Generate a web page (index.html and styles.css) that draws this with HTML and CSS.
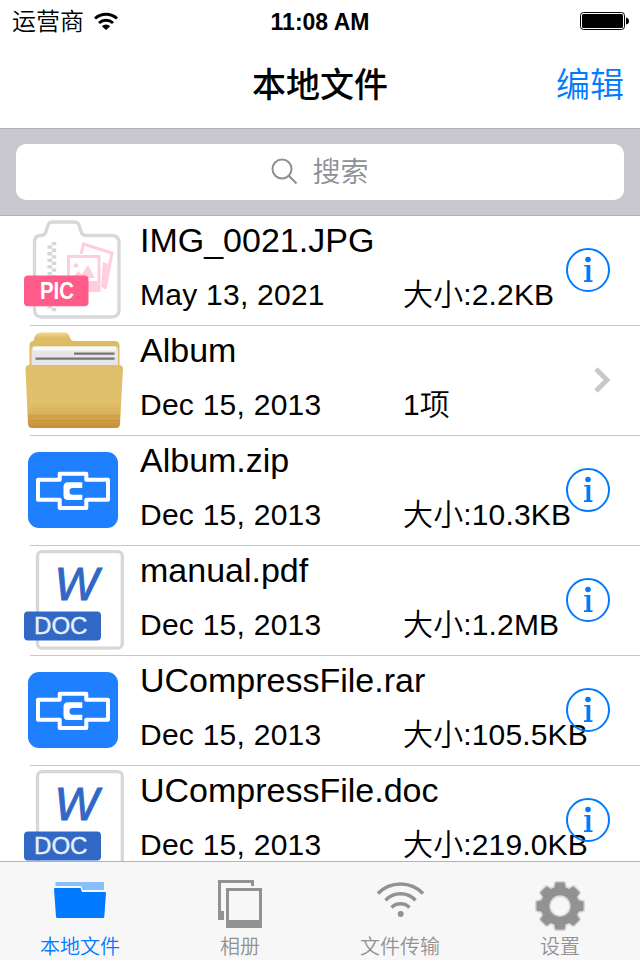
FILE: index.html
```html
<!DOCTYPE html>
<html lang="zh-CN">

<head>
    <meta charset="UTF-8">
    <meta name="viewport" content="width=device-width, initial-scale=1.0">
    <title>本地文件</title>
    <link rel="stylesheet" href="styles.css">
</head>

<body>

    <!-- Shared icons -->
    <svg class="sprite" width="0" height="0">
        <defs>
            <linearGradient id="folderFront" x1="0" y1="0" x2="0" y2="1">
                <stop offset="0" stop-color="#dfbf69" />
                <stop offset="0.6" stop-color="#e1c06b" />
                <stop offset="0.78" stop-color="#d9b05a" />
                <stop offset="0.8" stop-color="#cf9f4b" />
                <stop offset="0.87" stop-color="#d4a54d" />
                <stop offset="0.88" stop-color="#c8933c" />
                <stop offset="0.9" stop-color="#d19d43" />
                <stop offset="1" stop-color="#c68e35" />
            </linearGradient>
            <linearGradient id="folderBack" x1="0" y1="0" x2="0" y2="1">
                <stop offset="0" stop-color="#f0d98a" />
                <stop offset="0.15" stop-color="#ddbc66" />
                <stop offset="1" stop-color="#dcba63" />
            </linearGradient>
            <path id="tooth" d="M25 15l1.300-6.500h7.400L35 15z" />
        </defs>
        <symbol id="pic" viewBox="0 0 100 100">
            <path d="M16.500 15.500q4.500 0 5.500-4l2-6.200q1-3.300 5-3.300h21q4 0 5 3.300l2 6.200q1 4 5.500 4h25q7.500 0 7.500 7v67q0 7.500-7.500 7.500H18q-7.500 0-7.500-7.500V22.500q0-7 6-7z" fill="#fff" stroke="#d8d8d8" stroke-width="3.300" />
            <path d="M30 22v70" stroke="#d6d6d6" stroke-width="4.500" stroke-dasharray="3.300 3.300" />
            <path d="M25.700 25.500v66" stroke="#d6d6d6" stroke-width="4.500" stroke-dasharray="3.300 3.300" />
            <g fill="none" stroke="#ffcedc" stroke-width="3">
                <path d="M57 34l2.500-10L88 33l-7 36" />
                <path d="M79 42l5 2-4 24-3-1z" fill="#ffcedc" stroke="none" />
                <path d="M44.500 36.400h30.500v34h-30.500z" fill="#fff" />
                <path d="M45 61h30v11H45z" fill="#ffcedc" stroke="none" />
                <circle cx="52" cy="45.500" r="2.300" fill="#ffcedc" stroke="none" />
                <path d="M49 58l5-7 4 3 6-9 7 13z" fill="#ffcedc" stroke="none" />
            </g>
            <rect y="55.500" width="64.500" height="30.700" rx="4" fill="#ff5c8a" />
            <text class="pic-label" x="16" y="79" textLength="34" lengthAdjust="spacingAndGlyphs">PIC</text>
        </symbol>
        <symbol id="folder" viewBox="0 0 100 100">
            <path d="M5.500 40V16q0-5 4-5 1-8 7-8.500h24q4 0 5.500 5 1 3.500 4 3.500h41q4.500 0 4.500 5v24z" fill="url(#folderBack)" />
            <path d="M7.500 40V20q0-3.500 3.500-3.500h80q3 0 3 3.500v20z" fill="#e6e6e6" />
            <path d="M9 18.500h83" stroke="#f8f8f8" stroke-width="4" />
            <path d="M50 23.700h40.500M11.500 28.700h79" stroke="#767676" stroke-width="2.300" />
            <path d="M5 35h90q4 0 4 4l-3 55q-.300 4-4 4H8q-3.700 0-4-4L1.500 39q0-4 3.500-4z" fill="url(#folderFront)" />
        </symbol>
        <symbol id="zip" viewBox="0 0 100 100">
            <rect x="4" y="12" width="90" height="76" rx="11" fill="#1e80fe" />
            <path d="M14 39.700h21.700v-6h26.600v6H84v20.100H62.300V68H35.700v-8.200H14z" fill="none" stroke="#fff" stroke-width="4" stroke-linejoin="round" />
            <path d="M58.300 42.300H44q-4.500 0-4.500 4.500v8.700q0 4.500 4.500 4.500h14.300v-5.200H48.500q-3 0-3-3v-.900q0-3 3-3h9.800z" fill="#fff" />
        </symbol>
        <symbol id="doc" viewBox="0 0 100 100">
            <rect x="13.500" y="1.700" width="84.800" height="96.500" rx="4.500" fill="#fff" stroke="#d7d7d7" stroke-width="3.300" />
            <text class="doc-letter" x="30.500" y="49.500" textLength="44" lengthAdjust="spacingAndGlyphs">W</text>
            <rect y="61.500" width="77" height="29" rx="4" fill="#3168c5" />
            <text class="doc-label" x="10" y="84" textLength="53.500" lengthAdjust="spacingAndGlyphs">DOC</text>
        </symbol>
        <symbol id="info" viewBox="0 0 44 44">
            <circle cx="22" cy="22" r="21" fill="none" stroke="#007aff" stroke-width="2" />
            <circle cx="22" cy="11.500" r="2.800" fill="#007aff" />
            <path d="M18.300 17h6v15.300h2.200V34h-8.500v-1.700h2.500V18.500h-2.200z" fill="#007aff" />
        </symbol>
        <symbol id="cog" viewBox="0 0 60 60">
            <circle cx="30" cy="31" r="15" fill="none" />
            <use href="#tooth" />
            <use href="#tooth" transform="rotate(45 30 31)" />
            <use href="#tooth" transform="rotate(90 30 31)" />
            <use href="#tooth" transform="rotate(135 30 31)" />
            <use href="#tooth" transform="rotate(180 30 31)" />
            <use href="#tooth" transform="rotate(225 30 31)" />
            <use href="#tooth" transform="rotate(270 30 31)" />
            <use href="#tooth" transform="rotate(315 30 31)" />
        </symbol>
    </svg>

    <div class="status-bar">
        <div class="carrier">
            <span>运营商</span>
            <svg width="24" height="18" viewBox="0 0 24 18">
                <path d="M1 6.500a16.500 16.500 0 0 1 22 0M5 11a10.500 10.500 0 0 1 14 0" fill="none" stroke="#000" stroke-width="3" />
                <path d="M7.800 14.200a6.300 6.300 0 0 1 8.400 0L12 18z" />
            </svg>
        </div>
        <div class="time">11:08 AM</div>
        <div class="battery">
            <svg width="50" height="20" viewBox="0 0 50 20">
                <rect x="0.500" y="1.500" width="44" height="17" rx="3" fill="none" stroke="#000" />
                <rect x="2" y="3" width="41" height="14" rx="1.500" />
                <path d="M46 6.500q3 .500 3 3.500t-3 3.500z" />
            </svg>
        </div>
    </div>

    <div class="nav-bar">
        <div class="nav-title">本地文件</div>
        <div class="nav-edit">编辑</div>
    </div>

    <div class="search-bar">
        <div class="search-field">
            <svg width="28" height="28" viewBox="0 0 28 28">
                <circle cx="11" cy="11" r="9.500" />
                <path d="M17.800 17.800l7.700 7.700" />
            </svg>
            <span>搜索</span>
        </div>
    </div>

    <div class="file-list">
        <div class="row">
            <svg class="file-icon"><use href="#pic" /></svg>
            <div class="file">
                <div class="name">IMG_0021.JPG</div>
                <div class="meta"><span class="date">May 13, 2021</span><span>大小:2.2KB</span></div>
            </div>
            <svg class="info"><use href="#info" /></svg>
        </div>
        <div class="row">
            <svg class="file-icon"><use href="#folder" /></svg>
            <div class="file">
                <div class="name">Album</div>
                <div class="meta"><span class="date">Dec 15, 2013</span><span>1项</span></div>
            </div>
            <svg class="chevron" viewBox="0 0 18 28"><path d="M3 3l11 11L3 25" /></svg>
        </div>
        <div class="row">
            <svg class="file-icon"><use href="#zip" /></svg>
            <div class="file">
                <div class="name">Album.zip</div>
                <div class="meta"><span class="date">Dec 15, 2013</span><span>大小:10.3KB</span></div>
            </div>
            <svg class="info"><use href="#info" /></svg>
        </div>
        <div class="row">
            <svg class="file-icon"><use href="#doc" /></svg>
            <div class="file">
                <div class="name">manual.pdf</div>
                <div class="meta"><span class="date">Dec 15, 2013</span><span>大小:1.2MB</span></div>
            </div>
            <svg class="info"><use href="#info" /></svg>
        </div>
        <div class="row">
            <svg class="file-icon"><use href="#zip" /></svg>
            <div class="file">
                <div class="name">UCompressFile.rar</div>
                <div class="meta"><span class="date">Dec 15, 2013</span><span>大小:105.5KB</span></div>
            </div>
            <svg class="info"><use href="#info" /></svg>
        </div>
        <div class="row">
            <svg class="file-icon"><use href="#doc" /></svg>
            <div class="file">
                <div class="name">UCompressFile.doc</div>
                <div class="meta"><span class="date">Dec 15, 2013</span><span>大小:219.0KB</span></div>
            </div>
            <svg class="info"><use href="#info" /></svg>
        </div>
    </div>

    <div class="tab-bar">
        <div class="tab active">
            <svg viewBox="0 0 60 60">
                <path d="M5.500 7h48.500v8H33l-2-4H5.500z" opacity="0.450" />
                <path d="M4 14q0-1 1-1h25.500l1.500 4h23q1 0 1 1l-1.700 23.500q-.100 1.500-1.500 1.500H7.500Q6 43 6 41.500z" />
            </svg>
            <span>本地文件</span>
        </div>
        <div class="tab">
            <svg viewBox="0 0 60 60">
                <path d="M8 5h36v6h-3V8H11v28h3v9H8z" />
                <path d="M16 13h36v40H16zM19 16v29h30V16z" fill-rule="evenodd" />
            </svg>
            <span>相册</span>
        </div>
        <div class="tab">
            <svg viewBox="0 0 60 60">
                <g class="waves">
                    <path d="M8 18.500a31.400 31.400 0 0 1 45 0" />
                    <path d="M15.500 25.300a20.500 20.500 0 0 1 30 0" />
                    <path d="M21.500 32.500a12.500 12.500 0 0 1 18 0" />
                </g>
                <circle cx="30.700" cy="39" r="3" />
            </svg>
            <span>文件传输</span>
        </div>
        <div class="tab">
            <svg viewBox="0 0 60 60">
                <circle class="ring-halo" cx="30" cy="31" r="15" />
                <g class="teeth-halo">
                    <use href="#cog" width="60" height="60" />
                </g>
                <circle class="ring" cx="30" cy="31" r="15" />
                <g class="teeth">
                    <use href="#cog" width="60" height="60" />
                </g>
            </svg>
            <span>设置</span>
        </div>
    </div>

</body>

</html>
```

FILE: styles.css
```css
body {
    font-family: "Liberation Sans", "Noto Sans CJK SC", sans-serif;
    margin: 0;
    height: 960px;
    display: flex;
    flex-direction: column;
    overflow: hidden;
    background-color: #fff;
    color: #000;
}

svg {
    flex-shrink: 0;
}

.sprite {
    position: absolute;
}

/* Status bar */
.status-bar {
    display: grid;
    grid-template-columns: 1fr auto 1fr;
    align-items: center;
    height: 40px;
    padding: 0 10px 0 12px;
    flex-shrink: 0;
}

.carrier {
    display: flex;
    align-items: center;
    gap: 10px;
    font-size: 24px;
    font-weight: 350;
    line-height: 40px;
}

.carrier span {
    padding-top: 2px;
}

.time {
    font-size: 23px;
    font-weight: bold;
    line-height: 40px;
    padding: 1px 2px 0 0;
}

.battery {
    display: flex;
    justify-content: flex-end;
}

/* Navigation bar */
.nav-bar {
    box-sizing: border-box;
    display: grid;
    grid-template-columns: 1fr auto 1fr;
    height: 88px;
    line-height: 88px;
    padding: 1px 16px 0;
    font-size: 34px;
    flex-shrink: 0;
}

.nav-title {
    grid-column: 2;
    font-weight: 500;
}

.nav-edit {
    color: #007aff;
    font-weight: 350;
    text-align: right;
}

/* Search */
.search-bar {
    box-sizing: border-box;
    height: 88px;
    padding: 15px 16px;
    background-color: #c9c8ce;
    border-top: 1px solid #b2b2b5;
    border-bottom: 1px solid #b2b2b5;
    flex-shrink: 0;
}

.search-field {
    display: flex;
    justify-content: center;
    align-items: center;
    gap: 13px;
    height: 56px;
    border-radius: 10px;
    background-color: #fff;
    color: #8e8e93;
    font-size: 28px;
    font-weight: 350;
    line-height: 56px;
}

.search-field span {
    padding-top: 2px;
}

.search-field svg {
    fill: none;
    stroke: #8e8e93;
    stroke-width: 2;
}

/* File list */
.file-list {
    flex: 1;
    min-height: 0;
    overflow: hidden;
}

.row {
    position: relative;
    display: flex;
    gap: 16px;
    height: 110px;
    padding-left: 24px;
    /* separator starts 30px from the left edge */
    background: linear-gradient(#c8c7cc, #c8c7cc) 30px 109px / 610px 1px no-repeat;
}

.file-icon {
    width: 100px;
    height: 100px;
    margin-top: 4px;
}

.name {
    font-size: 34px;
    line-height: 48px;
    height: 48px;
    white-space: nowrap;
}

.meta {
    display: flex;
    font-size: 30px;
    font-weight: 350;
    line-height: 61px;
    height: 61px;
    letter-spacing: 0.15px;
    white-space: nowrap;
}

.date {
    width: 263px;
    letter-spacing: 0.25px;
}

.info {
    position: absolute;
    top: 32px;
    right: 30px;
    width: 44px;
    height: 44px;
}

.chevron {
    position: absolute;
    top: 40px;
    right: 29px;
    width: 18px;
    height: 28px;
    fill: none;
    stroke: #c7c7cc;
    stroke-width: 4.8;
}

/* Text inside the file icons */
.pic-label {
    font-size: 23px;
    font-weight: bold;
    fill: #fff;
}

.doc-letter {
    font-size: 47px;
    font-style: italic;
    fill: #3168c5;
    stroke: #3168c5;
    stroke-width: 1;
}

.doc-label {
    font-size: 23px;
    fill: #e8effa;
    stroke: #e8effa;
    stroke-width: 0.4;
}

/* Tab bar */
.tab-bar {
    display: grid;
    grid-template-columns: repeat(4, 1fr);
    height: 98px;
    background-color: #f7f7f8;
    border-top: 1px solid #b2b2b2;
    flex-shrink: 0;
}

.tab {
    display: flex;
    flex-direction: column;
    align-items: center;
    padding-top: 13px;
    color: #929292;
    fill: #929292;
    font-size: 20px;
    font-weight: 350;
}

.tab svg {
    width: 60px;
    height: 60px;
}

.tab span {
    line-height: 24px;
}

.tab.active {
    color: #007aff;
    fill: #007aff;
}

.waves {
    fill: none;
    stroke: #929292;
    stroke-width: 3.5;
}

/* Gear: a thick ring with rounded teeth, and a light edge behind both */
.ring,
.ring-halo {
    fill: none;
    stroke: #929292;
    stroke-width: 8.5;
}

.ring-halo {
    stroke: #d6d6d6;
    stroke-width: 11.5;
}

.teeth,
.teeth-halo {
    fill: #929292;
    stroke: #929292;
    stroke-width: 2;
    stroke-linejoin: round;
}

.teeth-halo {
    fill: #d6d6d6;
    stroke: #d6d6d6;
    stroke-width: 5;
}
```
